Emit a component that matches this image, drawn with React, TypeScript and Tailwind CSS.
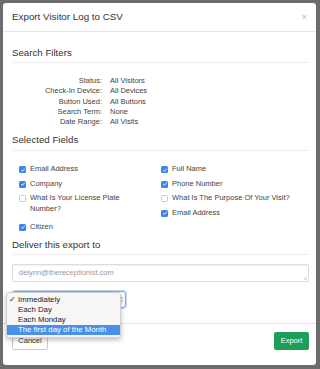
import React from 'react';

const filters: [string, string][] = [
  ['Status:', 'All Visitors'],
  ['Check-In Device:', 'All Devices'],
  ['Button Used:', 'All Buttons'],
  ['Search Term:', 'None'],
  ['Date Range:', 'All Visits'],
];

const Check = ({ on }: { on: boolean }) =>
  on ? (
    <span className="mt-[2px] flex h-[7px] w-[7px] shrink-0 items-center justify-center rounded-[1.5px] bg-[#3a84ee]">
      <svg viewBox="0 0 8 8" className="h-[6px] w-[6px]">
        <path d="M1.6 4.2 L3.3 5.8 L6.4 2.2" fill="none" stroke="white" strokeWidth="1.2" />
      </svg>
    </span>
  ) : (
    <span className="mt-[2px] h-[7px] w-[7px] shrink-0 rounded-[1.5px] border border-[#c8c8c8] bg-white" />
  );

const Field = ({ label, on, className = '' }: { label: React.ReactNode; on: boolean; className?: string }) => (
  <div className={`flex items-start gap-[4px] ${className}`}>
    <Check on={on} />
    <span className="w-[112px] leading-[10.3px]">{label}</span>
  </div>
);

const Heading = ({ children, className = '' }: { children: React.ReactNode; className?: string }) => (
  <div className={`border-b border-[#eeeeee] text-[9.7px] leading-[12px] text-[#333] ${className}`}>{children}</div>
);

export default function App() {
  return (
    <div
      className="h-[369px] w-[320px] overflow-hidden bg-[#6c6c6c] pl-[3px] pt-[3px]"
      style={{ fontFamily: '"Liberation Sans", Arial, sans-serif' }}
    >
      <div className="flex h-[362px] w-[313px] flex-col rounded-[3px] bg-white text-[7.5px] text-[#444]">
        {/* Header */}
        <div className="flex h-[29px] shrink-0 items-center justify-between border-b border-[#e5e5e5] pl-[9px] pr-[9px]">
          <span className="text-[9.8px] text-[#333]">Export Visitor Log to CSV</span>
          <span className="text-[9px] font-bold leading-none text-[#c8c8c8]">×</span>
        </div>

        {/* Body */}
        <div className="pl-[9px] pr-[7px]">
          <Heading className="mt-[15px] pb-[3px]">Search Filters</Heading>

          <div className="mt-[13px] grid grid-cols-[90px_1fr] gap-x-[8px] leading-[10.3px]">
            {filters.map(([k, v]) => (
              <React.Fragment key={k}>
                <span className="text-right">{k}</span>
                <span>{v}</span>
              </React.Fragment>
            ))}
          </div>

          <Heading className="mt-[7px] pb-[4px]">Selected Fields</Heading>

          <div className="mt-[13px] grid grid-cols-[149px_1fr]">
            <div className="flex flex-col gap-y-[4.2px] pl-[7px]">
              <Field on label="Email Address" />
              <Field on label="Company" />
              <Field on={false} label="What Is Your License Plate Number?" />
              <Field on label="Citizen" className="mt-[3.5px]" />
            </div>
            <div className="flex flex-col gap-y-[4.2px]">
              <Field on label="Full Name" />
              <Field on label="Phone Number" />
              <Field on={false} label={<span className="whitespace-nowrap">What Is The Purpose Of Your Visit?</span>} />
              <Field on label="Email Address" />
            </div>
          </div>

          <Heading className="mt-[7px] pb-[3px]">Deliver this export to</Heading>

          <div className="relative mt-[9px] h-[18px] rounded-[2px] border border-[#dcdcdc] pl-[6px] text-[7.5px] leading-[16px] text-[#9a9a9a] shadow-[inset_0_1px_1px_rgba(0,0,0,0.06)]">
            delynn@thereceptionist.com
            <svg viewBox="0 0 6 6" className="absolute bottom-[1px] right-[1px] h-[4px] w-[4px]">
              <path d="M1 6 L6 1 M3.5 6 L6 3.5" stroke="#9a9a9a" strokeWidth="0.8" />
            </svg>
          </div>

          <div className="relative mt-[9px] h-[17px] w-[114px] rounded-[3px] border border-[#7aa7e8] shadow-[0_0_0_1px_rgba(90,150,235,0.35)]">
            <svg viewBox="0 0 6 10" className="absolute right-[2px] top-[4px] h-[7px] w-[4px]">
              <path d="M1 4 L3 1.5 L5 4 M1 6 L3 8.5 L5 6" fill="none" stroke="#555" strokeWidth="1" />
            </svg>

            {/* open native menu */}
            <div className="absolute left-[-7px] top-[0px] z-10 w-[115px] rounded-[3px] border border-[#d0d0d0] bg-[#f6f6f6] py-[2px] text-[7.8px] leading-[10px] text-[#222] shadow-[0_2px_5px_rgba(0,0,0,0.25)]">
              <div className="relative pl-[11px]">
                <span className="absolute left-[2px] top-0">✓</span>
                Immediately
              </div>
              <div className="pl-[11px]">Each Day</div>
              <div className="pl-[11px]">Each Monday</div>
              <div className="bg-[#4a90e8] pl-[11px] text-white">The first day of the Month</div>
            </div>
          </div>
        </div>

        {/* Footer */}
        <div className="mt-[15px] flex items-center justify-between border-t border-[#e5e5e5] pb-[15px] pl-[9px] pr-[7px] pt-[8px]">
          <button className="h-[18px] w-[36px] rounded-[2px] border border-[#cccccc] bg-white text-[7.5px] text-[#333]">
            Cancel
          </button>
          <button className="h-[18px] w-[35px] rounded-[2px] bg-[#1f9d5b] text-[7.5px] text-white">Export</button>
        </div>
      </div>
    </div>
  );
}
